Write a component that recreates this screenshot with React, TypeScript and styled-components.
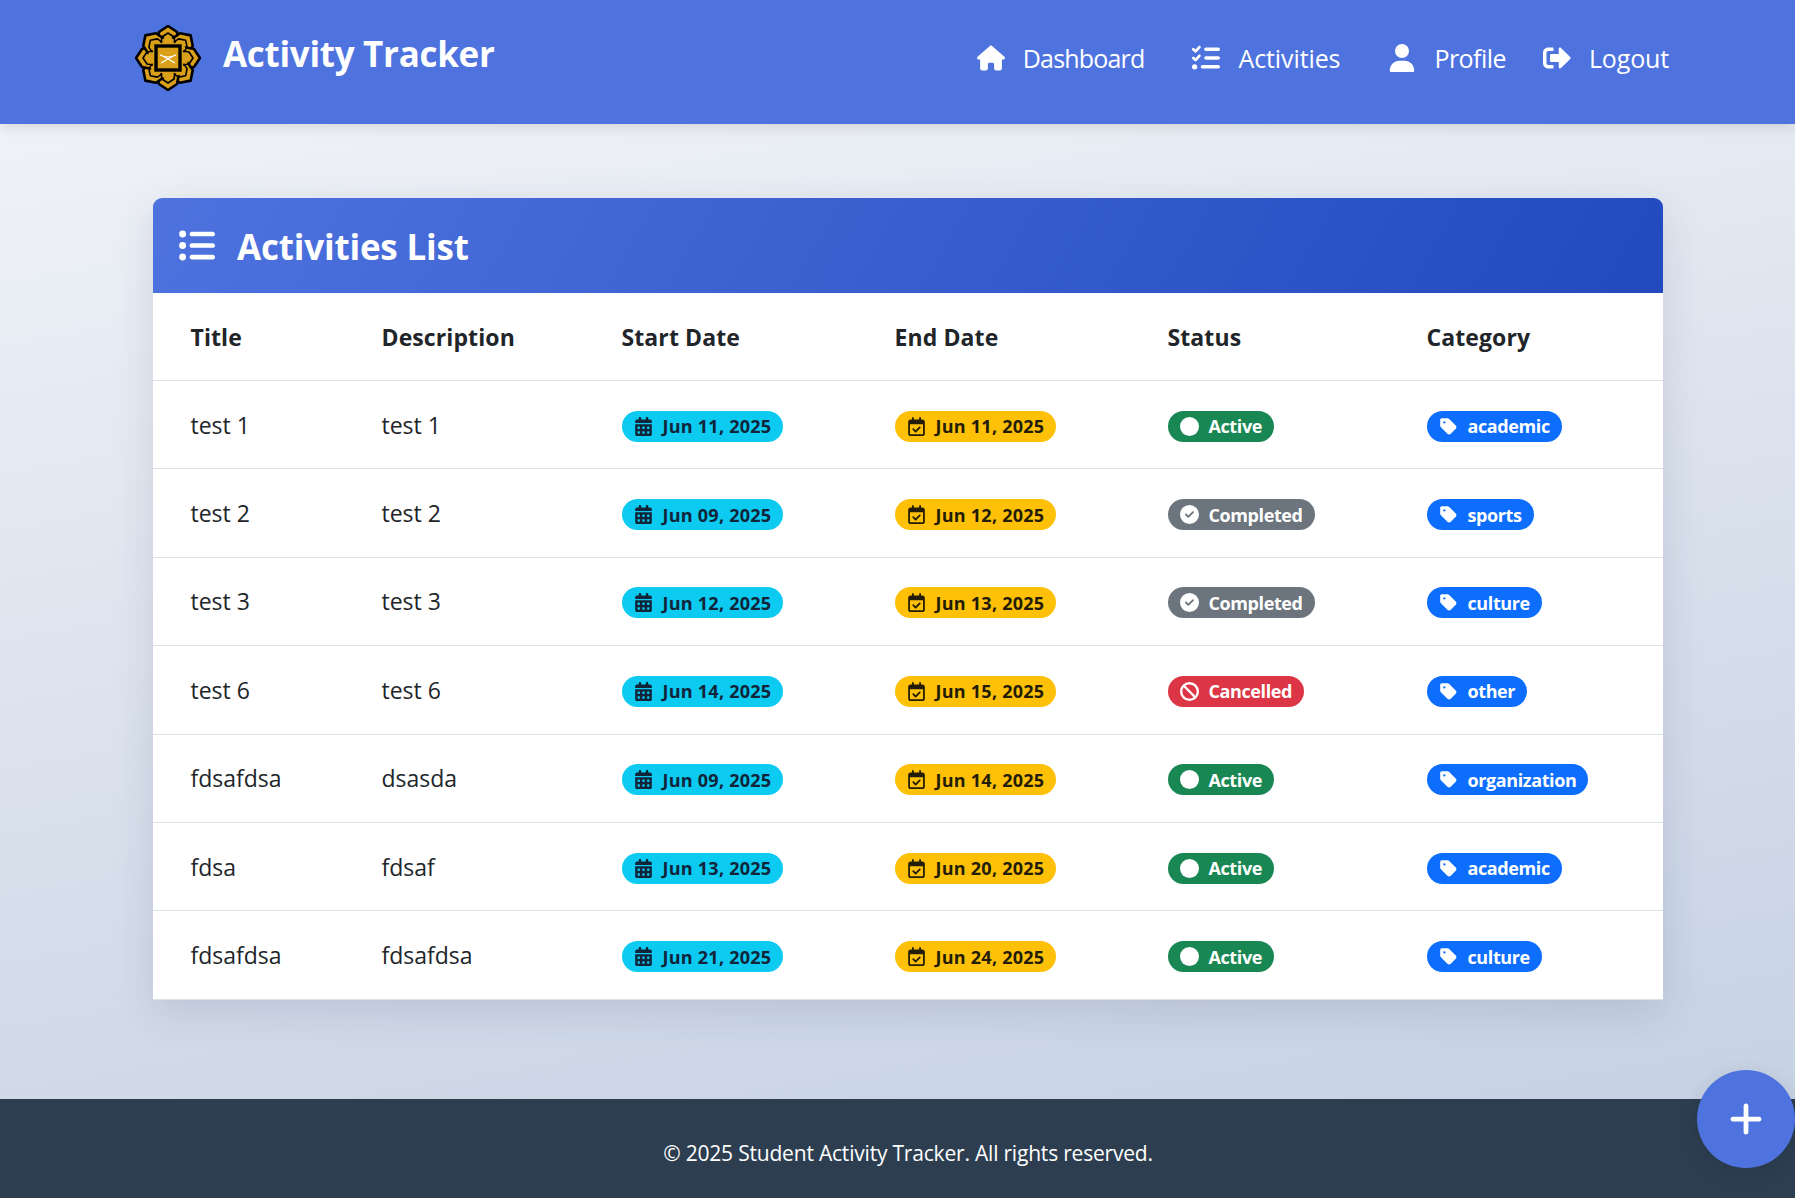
import React from "react";
import styled, { createGlobalStyle } from "styled-components";
import { FaHouse, FaListCheck, FaUser, FaListUl, FaCalendarDays, FaRegCalendarCheck, FaCircle, FaCircleCheck, FaBan, FaTag, FaPlus } from "react-icons/fa6";
import { FaSignOutAlt } from "react-icons/fa";

const Global = createGlobalStyle`
  html, body { margin: 0; padding: 0; }
  body { font-family: "Open Sans", "Noto Sans", sans-serif; overflow: hidden; }
`;

const Page = styled.div`
  width: 1795px; height: 1198px; display: flex; flex-direction: column; overflow: hidden;
  background: linear-gradient(170deg, #f3f5f9 0%, #c3cfe2 100%);
`;
const Navbar = styled.header`
  height: 124px; flex: none; box-sizing: border-box; background: #4e73df; color: #fff;
  display: flex; align-items: center; justify-content: space-between;
  padding: 0 126px 8px 135px; box-shadow: 0 4px 12px rgba(0,0,0,.1); position: relative;
`;
const Brand = styled.div`display: flex; align-items: center; gap: 22px;`;
const BrandText = styled.span`font-size: 35px; font-weight: 700; letter-spacing: -0.3px; position: relative; top: -5px;`;
const Nav = styled.nav`display: flex; align-items: center; gap: 48px;`;
const NavItem = styled.a<{ $track: number }>`
  display: flex; align-items: center; gap: 18px; font-size: 25px; font-weight: 500; color: #fff;
  letter-spacing: ${p => p.$track}px;
  svg { font-size: 28px; }
  &:last-child { margin-left: -11px; }
`;
const Main = styled.main`flex: 1; padding: 74px 132px 0 153px;`;
const Card = styled.section`
  background: #fff; border-radius: 9px 9px 0 0; overflow: hidden;
  box-shadow: 0 12px 40px rgba(50,60,90,.14);
`;
const CardHead = styled.div`
  height: 95px; box-sizing: border-box; display: flex; align-items: center; gap: 22px; padding: 0 25px; color: #fff;
  background: linear-gradient(120deg, #4e73df 0%, #224abe 100%);
  svg { font-size: 37px; }
`;
const CardTitle = styled.h2`margin: 2px 0 0; font-size: 35px; font-weight: 700; letter-spacing: -0.2px;`;
const Table = styled.table`width: 100%; border-collapse: separate; border-spacing: 0; table-layout: fixed; color: #212529;`;
const Th = styled.th`
  height: 88px; box-sizing: border-box; padding: 1px 0 0 37.5px; text-align: left; font-size: 23px; font-weight: 700; letter-spacing: 0.1px;
  color: #212529; border-bottom: 1px solid #dee2e6;
`;
const Td = styled.td`
  height: 88.4px; box-sizing: border-box; padding: 0 0 0 37.5px; font-size: 23px; letter-spacing: 0;
  border-bottom: 1px solid #dee2e6;
`;
const tones: Record<string, { bg: string; fg: string }> = {
  info: { bg: "#0dcaf0", fg: "#10243a" },
  warn: { bg: "#ffc107", fg: "#231c07" },
  active: { bg: "#198754", fg: "#fff" },
  done: { bg: "#6c757d", fg: "#fff" },
  cancel: { bg: "#dc3545", fg: "#fff" },
  cat: { bg: "#0d6efd", fg: "#fff" },
};
const Pill = styled.span<{ $tone: string; $track?: number }>`
  display: inline-flex; align-items: center; gap: 10px; height: 31px; box-sizing: border-box; padding: 0 12px;
  border-radius: 16px; font-size: 18px; font-weight: 700; letter-spacing: ${p => p.$track ?? -0.4}px; white-space: nowrap; position: relative; top: 2px;
  background: ${p => tones[p.$tone].bg}; color: ${p => tones[p.$tone].fg};
  svg { font-size: 19px; flex: none; }
`;
const Footer = styled.footer`
  height: 99px; flex: none; box-sizing: border-box; background: #2c3e50; color: #fff; font-size: 21px; letter-spacing: -0.2px;
  display: flex; align-items: center; justify-content: center; padding: 9px 0 0 21px;
`;
const Fab = styled.button`
  position: fixed; right: 0; bottom: 30px; width: 98px; height: 98px; border: 0; border-radius: 50%;
  background: #4e73df; color: #fff; display: flex; align-items: center; justify-content: center;
  box-shadow: 0 4px 20px rgba(0,0,0,.1);
  svg { font-size: 38px; }
`;

function Logo() {
  const petals = [0, 45, 90, 135, 180, 225, 270, 315];
  return (
    <svg width="66" height="66" viewBox="0 0 66 66">
      {petals.map(a => (
        <path
          key={a}
          transform={`rotate(${a} 33 33)`}
          d="M33 1 L42 7 L43.5 15 L39 26 L27 26 L22.5 15 L24 7 Z"
          fill="#daa01a" stroke="#000" strokeWidth="2.6" strokeLinejoin="round"
        />
      ))}
      <circle cx="33" cy="33" r="20" fill="#daa01a" />
      {petals.map(a => (
        <path
          key={a}
          transform={`rotate(${a} 33 33)`}
          d="M26 18 L27 12 L33 8 L39 12 L40 18"
          fill="none" stroke="#000" strokeWidth="1.6" strokeLinejoin="round"
        />
      ))}
      <rect x="21" y="21" width="24" height="24" fill="#daa01a" stroke="#000" strokeWidth="3.4" />
      <path d="M25 30 Q33 34 41 30 M26 38 L40 30 M26 30 L40 38" fill="none" stroke="#fff" strokeWidth="1.2" />
    </svg>
  );
}

const statusInfo: Record<string, { tone: string; icon: React.ReactNode; label: string }> = {
  active: { tone: "active", icon: <FaCircle />, label: "Active" },
  done: { tone: "done", icon: <FaCircleCheck />, label: "Completed" },
  cancel: { tone: "cancel", icon: <FaBan />, label: "Cancelled" },
};

const rows = [
  ["test 1", "test 1", "Jun 11, 2025", "Jun 11, 2025", "active", "academic"],
  ["test 2", "test 2", "Jun 09, 2025", "Jun 12, 2025", "done", "sports"],
  ["test 3", "test 3", "Jun 12, 2025", "Jun 13, 2025", "done", "culture"],
  ["test 6", "test 6", "Jun 14, 2025", "Jun 15, 2025", "cancel", "other"],
  ["fdsafdsa", "dsasda", "Jun 09, 2025", "Jun 14, 2025", "active", "organization"],
  ["fdsa", "fdsaf", "Jun 13, 2025", "Jun 20, 2025", "active", "academic"],
  ["fdsafdsa", "fdsafdsa", "Jun 21, 2025", "Jun 24, 2025", "active", "culture"],
];

export default function App() {
  return (
    <Page>
      <Global />
      <Navbar>
        <Brand><Logo /><BrandText>Activity Tracker</BrandText></Brand>
        <Nav>
          <NavItem $track={-0.82}><FaHouse />Dashboard</NavItem>
          <NavItem $track={-0.1}><FaListCheck />Activities</NavItem>
          <NavItem $track={-0.55}><FaUser />Profile</NavItem>
          <NavItem $track={-0.15}><FaSignOutAlt />Logout</NavItem>
        </Nav>
      </Navbar>
      <Main>
        <Card>
          <CardHead><FaListUl /><CardTitle>Activities List</CardTitle></CardHead>
          <Table>
            <colgroup>
              <col width="191" /><col width="240" /><col width="273" /><col width="273" /><col width="259" /><col />
            </colgroup>
            <thead>
              <tr><Th>Title</Th><Th>Description</Th><Th>Start Date</Th><Th>End Date</Th><Th>Status</Th><Th>Category</Th></tr>
            </thead>
            <tbody>
              {rows.map((r, i) => {
                const s = statusInfo[r[4]];
                return (
                  <tr key={i}>
                    <Td>{r[0]}</Td>
                    <Td>{r[1]}</Td>
                    <Td><Pill $tone="info" $track={0.25}><FaCalendarDays />{r[2]}</Pill></Td>
                    <Td><Pill $tone="warn" $track={0.25}><FaRegCalendarCheck />{r[3]}</Pill></Td>
                    <Td><Pill $tone={s.tone}>{s.icon}{s.label}</Pill></Td>
                    <Td><Pill $tone="cat"><FaTag />{r[5]}</Pill></Td>
                  </tr>
                );
              })}
            </tbody>
          </Table>
        </Card>
      </Main>
      <Footer>© 2025 Student Activity Tracker. All rights reserved.</Footer>
      <Fab><FaPlus /></Fab>
    </Page>
  );
}
